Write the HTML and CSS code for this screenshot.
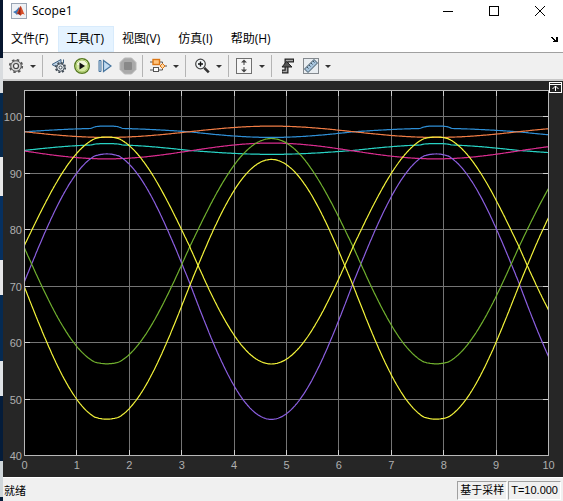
FILE: index.html
```html
<!DOCTYPE html>
<html lang="zh-CN">
<head>
<meta charset="utf-8">
<title>Scope1</title>
<link rel="stylesheet" href="styles.css">
</head>
<body>
<div class="desktop">
<main class="window">
  <header class="titlebar">
    <svg class="logo" width="16" height="16" viewBox="0 0 16 16" aria-hidden="true">
      <rect x=".5" y=".5" width="15" height="15" fill="#eef1f5" stroke="#9aa5b4"/>
      <path d="M2 9l3-1.5L8 4l1 4-3 4-1.5-1.5z" fill="#3d78b8"/>
      <path d="M5 10.5c2-1 3-6 4.5-7.5C11 4 12 9 14 12c-2-1.500-3-1-4.500.8C8.500 11 7 10.500 5 10.500z" fill="#d8502a"/>
      <path d="M9.500 3c-.8 2-1.500 6-3 8 1.300 0 2.500.8 3 1.800z" fill="#8e2018"/>
    </svg>
    <h1 class="title">Scope1</h1>
    <button class="winbtn" type="button" aria-label="最小化"><svg width="12" height="12" viewBox="0 0 12 12"><path d="M1 6.500h10"/></svg></button>
    <button class="winbtn" type="button" aria-label="最大化"><svg width="12" height="12" viewBox="0 0 12 12"><rect x="1.500" y="1.500" width="9" height="9"/></svg></button>
    <button class="winbtn" type="button" aria-label="关闭"><svg width="12" height="12" viewBox="0 0 12 12"><path d="M1 1l10 10M11 1L1 11"/></svg></button>
  </header>

  <nav class="menubar">
    <button class="menu" type="button">文件(F)</button>
    <button class="menu menu-active" type="button">工具(T)</button>
    <button class="menu" type="button">视图(V)</button>
    <button class="menu" type="button">仿真(I)</button>
    <button class="menu" type="button">帮助(H)</button>
    <button class="dock" type="button" aria-label="停靠"><svg width="8" height="7" viewBox="0 0 8 7"><path d="M0 1h2v1h1v1h1v1h1V1h2v5H2V5h1V4H2V3H1V2H0z" fill="#000"/></svg></button>
  </nav>

  <div class="toolbar" role="toolbar">
    <button class="tool" type="button" aria-label="设置"><svg width="16" height="16" viewBox="0 0 16 16"><circle cx="8" cy="8" r="6.300" fill="none" stroke="#555" stroke-width="1.600" stroke-dasharray="2.500 2.450"/><circle cx="8" cy="8" r="5.300" fill="#d4d4d4" stroke="#555"/><circle cx="8" cy="8" r="2.500" fill="#f5f5f5" stroke="#444" stroke-width="1.200"/></svg></button>
    <button class="caret" type="button" aria-label="设置选项"></button>
    <span class="sep"></span>
    <button class="tool" type="button" aria-label="步进选项"><svg width="16" height="16" viewBox="0 0 16 16"><path d="M1 6.500L10 1.500v10z" fill="#bdd3e6" stroke="#3d5f80"/><circle cx="9.500" cy="9.500" r="4.700" fill="none" stroke="#414b55" stroke-width="1.800" stroke-dasharray="2 1.690"/><circle cx="9.500" cy="9.500" r="3.800" fill="#dde2e6" stroke="#414b55"/><circle cx="9.500" cy="9.500" r="1.500" fill="#fff" stroke="#414b55"/><path d="M12.500 1.500v4" stroke="#3d5f80"/></svg></button>
    <button class="tool" type="button" aria-label="运行"><svg width="18" height="18" viewBox="0 0 18 18"><circle cx="9" cy="9" r="7.300" fill="#d6e9a4" stroke="#577b22" stroke-width="1.400"/><path d="M3 8a6 5.500 0 0 1 12 0z" fill="#f1f7d9"/><circle cx="9" cy="9" r="6" fill="none" stroke="#a5c660"/><path d="M6.500 5.500v7L12 9z" fill="#111"/></svg></button>
    <button class="tool" type="button" aria-label="步进"><svg width="14" height="14" viewBox="0 0 14 14"><path d="M1 1.500h2v11H1z" fill="#c8ddef" stroke="#47759e"/><path d="M5.500 1.500v11L13 7z" fill="#c2dcf2" stroke="#47759e" stroke-width="1.200"/></svg></button>
    <button class="tool" type="button" aria-label="停止" disabled><svg width="18" height="18" viewBox="0 0 18 18"><path d="M5.500 1h7L17 5.500v7L12.500 17h-7L1 12.500v-7z" fill="#aaa" stroke="#b9b9b9"/><rect x="5" y="5" width="8" height="8" rx="1" fill="#898989"/></svg></button>
    <span class="sep"></span>
    <button class="tool" type="button" aria-label="选择信号"><svg width="18" height="16" viewBox="0 0 18 16"><path d="M0 4h3M10 4h2.500v2M0 12h3M9 12h3.500v-2M15 8h2" fill="none" stroke="#555"/><rect x="3" y="1.500" width="6.500" height="5" fill="#ffc37c" stroke="#db7615" stroke-width="1.400"/><rect x="3.500" y="9.500" width="5" height="4" fill="#fff" stroke="#555"/><path d="M10 8l2.500-2.500L15 8l-2.500 2.500z" fill="#ffd5a0" stroke="#db7615"/></svg></button>
    <button class="caret" type="button" aria-label="信号选项"></button>
    <span class="sep"></span>
    <button class="tool" type="button" aria-label="放大"><svg width="16" height="16" viewBox="0 0 16 16"><circle cx="6.500" cy="6" r="4.800" fill="#f4f8fa" stroke="#444" stroke-width="1.200"/><path d="M4 6h5M6.500 3.500v5" stroke="#111" stroke-width="1.400"/><path d="M10.300 9.800l4.500 4.500" stroke="#333" stroke-width="2.600"/></svg></button>
    <button class="caret" type="button" aria-label="缩放选项"></button>
    <span class="sep"></span>
    <button class="tool" type="button" aria-label="缩放 Y 轴"><svg width="17" height="18" viewBox="0 0 17 18"><rect x=".5" y="1.500" width="15" height="15" fill="#f6f6f6" stroke="#707070"/><path d="M8 4v10" stroke="#444" stroke-dasharray="4 2"/><path d="M5 5.500l3-3 3 3zM5 12.500l3 3 3-3z" fill="#444"/></svg></button>
    <button class="caret" type="button" aria-label="坐标轴选项"></button>
    <span class="sep"></span>
    <button class="tool" type="button" aria-label="触发器"><svg width="16" height="16" viewBox="0 0 16 16"><path d="M2 13.500h4.500v-11H14" fill="none" stroke="#222" stroke-width="4"/><path d="M2.500 13.500h4v-11H13" fill="none" stroke="#a9a9a9" stroke-width="1.500"/><path d="M2 9l4.500-5.500L12 9z" fill="#555" stroke="#222"/></svg></button>
    <button class="tool" type="button" aria-label="测量"><svg width="16" height="16" viewBox="0 0 16 16"><rect x=".5" y=".5" width="15" height="15" fill="#e8edf1" stroke="#84898e"/><path d="M1.500 11L11 1.500l3.500 3.500L5 14.500z" fill="#a7c4dc" stroke="#3e5261"/><path d="M4 9l1.500 1.500M6 7l1.500 1.500M8 5l1.500 1.500M10 3l1.500 1.500" stroke="#3e5261"/></svg></button>
    <button class="caret" type="button" aria-label="测量选项"></button>
  </div>

  <section class="scope">
    <svg class="plot" viewBox="3 81 560 396" role="img" aria-label="Scope1">
      <rect x="24" y="90" width="525" height="366" fill="#000"/>
      <g id="grid" class="grid"></g>
      <g id="curves" class="curves"></g>
      <g id="ticks" class="ticks"></g>
      <rect x="24.500" y="90.500" width="524" height="365" class="frame"/>
      <g id="labels" class="labels"></g>
    </svg>
    <button class="expand" type="button" aria-label="最大化坐标区"><svg width="13" height="11" viewBox="0 0 13 11"><rect x=".5" y=".5" width="12" height="10" fill="#222" stroke="#fff"/><path d="M1 2.500h11M6.500 4v5M3.500 7l3-3 3 3" fill="none" stroke="#fff"/></svg></button>
  </section>

  <footer class="status">
    <span class="ready">就绪</span>
    <span class="cell">基于采样</span>
    <span class="cell">T=10.000</span>
  </footer>
</main>
</div>
<script src="plot.js"></script>
</body>
</html>
```
FILE: styles.css
```css
* { box-sizing: border-box; }

body {
  margin: 0;
  background: #f0f0f0;
  color: #000;
  font: 12px/16px "Open Sans", "Noto Sans CJK SC", sans-serif;
}

button {
  padding: 0;
  border: 0;
  background: none;
  color: inherit;
  font: inherit;
}

svg { display: block; }

.desktop {
  padding-left: 3px;
  background: linear-gradient(#06162e 0 58px, #d9dcdf 58px 93px, #06294d 93px 157px, #e8e8e8 157px 196px, #063060 196px 260px, #e6e6e8 260px 295px, #052a52 295px 361px, #dfe3e6 361px 396px, #041c3a 396px 461px, #cfd6da 461px 497px, #041c3a 497px);
}

.window { background: #fff; }

.titlebar {
  display: flex;
  align-items: center;
  height: 22px;
  padding-left: 8px;
}

.title {
  flex: 1;
  margin: 0 0 0 5px;
  font-size: 12px;
  font-weight: 400;
}

.winbtn {
  display: flex;
  justify-content: center;
  width: 46px;
}

.winbtn svg {
  fill: none;
  stroke: #000;
}

.menubar {
  display: flex;
  align-items: center;
  height: 30px;
  padding: 4px 4px 0 0;
}

.menu {
  height: 26px;
  padding: 0 9px 0 7px;
  border: 1px solid transparent;
}

.menu-active {
  background: #e5f3ff;
  border-color: #d8ebfc;
}

.dock { margin-left: auto; }

.toolbar {
  display: flex;
  align-items: center;
  height: 29px;
  padding-left: 1px;
  background: #f0f0f0;
  border-top: 1px solid #a0a0a0;
  border-bottom: 2px solid #c8c8c8;
}

.tool {
  display: flex;
  align-items: center;
  justify-content: center;
  width: 23px;
  height: 22px;
}

.caret {
  display: flex;
  align-items: center;
  justify-content: center;
  width: 12px;
  height: 22px;
}

.caret::before {
  content: "";
  border: 3px solid transparent;
  border-top-color: #333;
  border-bottom: 0;
}

.sep {
  width: 1px;
  height: 22px;
  margin: 0 4px 0 3px;
  background: #b4b4b4;
}

.scope {
  position: relative;
  background: #262626;
}

.plot { width: 100%; }

.expand {
  position: absolute;
  top: 1px;
  right: 1px;
}

.grid {
  stroke: #747474;
  shape-rendering: crispEdges;
}

.ticks {
  stroke: #d0d0d0;
  shape-rendering: crispEdges;
}

.frame {
  fill: none;
  stroke: #b8b8b8;
}

.curves {
  fill: none;
  stroke-width: 1.2px;
}

.labels {
  fill: #afafaf;
  font: 11px "Liberation Sans", sans-serif;
}

.status {
  display: flex;
  align-items: center;
  gap: 1px;
  height: 24px;
  padding: 3px 2px 1px 1px;
  background: #f0f0f0;
  border-top: 1px solid #fff;
  font: 11px/16px "Liberation Sans", "Noto Sans CJK SC", sans-serif;
}

.ready { flex: 1; }

.cell {
  height: 19px;
  padding: 0 2px;
  border: 1px solid;
  border-color: #a0a0a0 #fff #fff #a0a0a0;
}
```
FILE: plot.js
```javascript
const NS = "http://www.w3.org/2000/svg";
const px = t => 24.5 + 52.4 * t;
const py = v => 116.5 + (100 - v) * 5.65;
const snap = n => Math.floor(n) + 0.5;

function add(parent, tag, attrs, text) {
  const el = document.createElementNS(NS, tag);
  for (const key in attrs) el.setAttribute(key, attrs[key]);
  if (text !== undefined) el.textContent = text;
  document.getElementById(parent).appendChild(el);
}

for (let t = 0; t <= 10; t++) {
  const x = snap(px(t));
  if (t > 0 && t < 10) add("grid", "path", { d: `M${x} 91V455` });
  add("ticks", "path", { d: `M${x} 91v5M${x} 455v-5` });
  add("labels", "text", { x: px(t), y: 469, "text-anchor": "middle" }, t);
}

for (let v = 40; v <= 100; v += 10) {
  const y = snap(py(v));
  if (v > 40) add("grid", "path", { d: `M25 ${y}H548` });
  add("ticks", "path", { d: `M25 ${y}h5M548 ${y}h-5` });
  add("labels", "text", { x: 22, y: y + 4, "text-anchor": "end" }, v);
}

// Each signal: level at t = 0, level near t = pi/2, level near t = 3pi/2,
// and the height of the small crest around t = pi/2.
const signals = [
  { color: "#2f8fd6", mid: 97.3, first: 97.9, second: 96.3, crest: 0.4 },
  { color: "#f07c45", mid: 97.3, first: 96.3, second: 98.3, crest: 0 },
  { color: "#28d2c4", mid: 94, first: 95, second: 93.3, crest: 0.2 },
  { color: "#d92c8e", mid: 93.9, first: 92.5, second: 95.3, crest: 0 },
  { color: "#8b5fe0", mid: 70.8, first: 93.4, second: 46.4, crest: 0 },
  { color: "#70b02e", mid: 76.7, first: 56.2, second: 96.1, crest: 0 },
  { color: "#f4f43a", mid: 69.8, first: 46.4, second: 92.4, crest: 0 },
  { color: "#f4f43a", mid: 77.2, first: 96.4, second: 56.2, crest: 0 }
];

// The large signals saturate slightly around t = pi/2.
const saturate = w => Math.min(w * 1.01, 0.982 + Math.max(0, w - 0.972) * 0.6);

for (const s of signals) {
  const points = [];
  const large = Math.abs(s.first - s.mid) > 10;
  for (let i = 0; i <= 500; i++) {
    const t = i / 50;
    const w = Math.sin(t);
    const amp = w > 0 ? s.first - s.mid : s.mid - s.second;
    const level = large && w > 0 ? saturate(w) : w;
    const rise = Math.min(1, Math.max(0, (w - 0.955) / 0.045));
    const crest = s.crest * rise * (2 - rise);
    points.push(`${px(t).toFixed(1)},${py(s.mid + amp * level + crest).toFixed(1)}`);
  }
  add("curves", "polyline", { points: points.join(" "), stroke: s.color });
}
```
